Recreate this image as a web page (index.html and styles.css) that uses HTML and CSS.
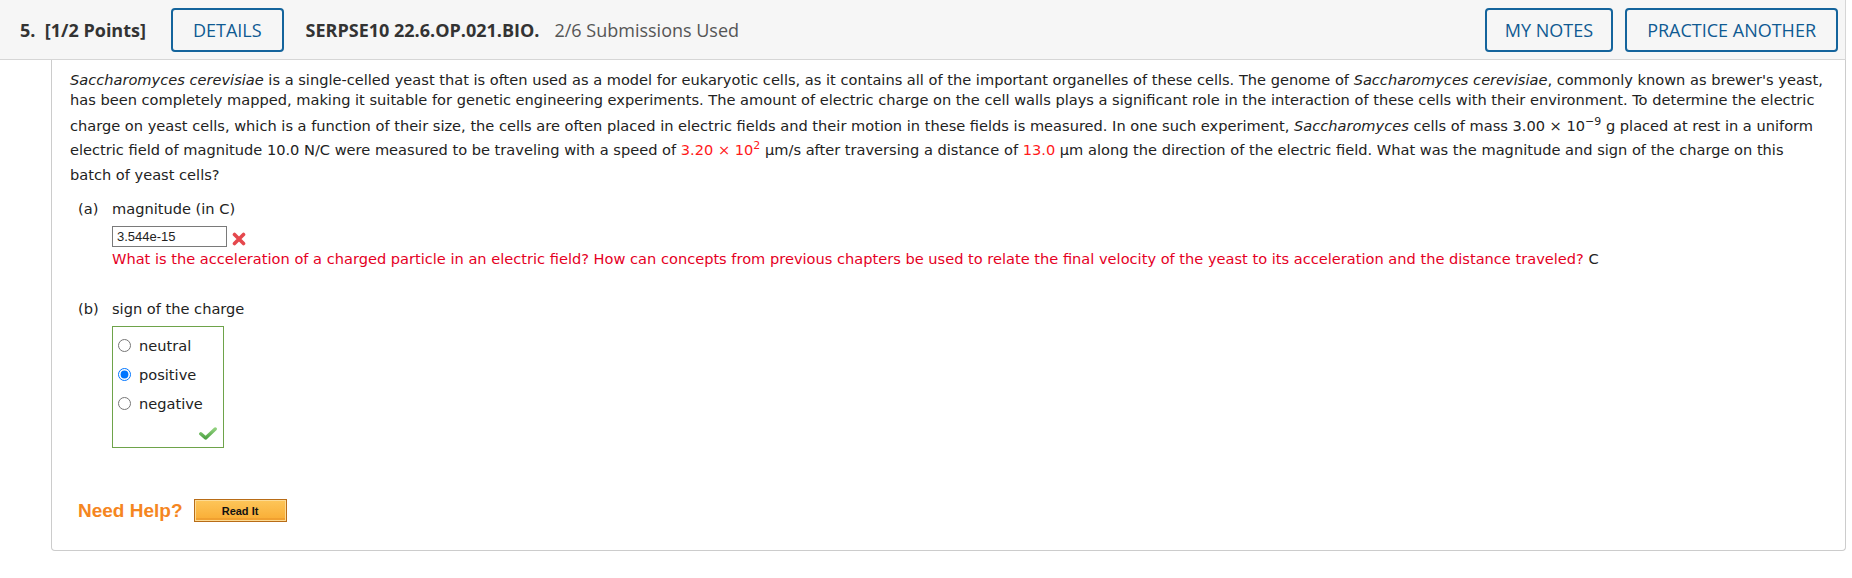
FILE: index.html
```html
<!DOCTYPE html>
<html lang="en">
<head>
<meta charset="utf-8">
<title>Question 5</title>
<link rel="stylesheet" href="styles.css">
</head>
<body>
<div class="question">
  <div class="qhead">
    <span class="qnum">5.&nbsp; [1/2 Points]</span>
    <button class="obtn details">DETAILS</button>
    <span class="qid">SERPSE10 22.6.OP.021.BIO.</span>
    <span class="subs">2/6 Submissions Used</span>
    <div class="head-actions">
      <button class="obtn notes">MY NOTES</button>
      <button class="obtn">PRACTICE ANOTHER</button>
    </div>
  </div>
  <div class="card">
    <p class="stem"><i>Saccharomyces cerevisiae</i> is a single-celled yeast that is often used as a model for eukaryotic cells, as it contains all of the important organelles of these cells. The genome of <i>Saccharomyces cerevisiae</i>, commonly known as brewer's yeast,<br>has been completely mapped, making it suitable for genetic engineering experiments. The amount of electric charge on the cell walls plays a significant role in the interaction of these cells with their environment. To determine the electric<br>charge on yeast cells, which is a function of their size, the cells are often placed in electric fields and their motion in these fields is measured. In one such experiment, <i>Saccharomyces</i> cells of mass <span class="math">3.00 × 10<span class="sup">−9</span></span> g placed at rest in a uniform<br>electric field of magnitude 10.0 N/C were measured to be traveling with a speed of <span class="math math-red red">3.20 × 10<span class="sup">2</span></span> µm/s after traversing a distance of <span class="red">13.0</span> µm along the direction of the electric field. What was the magnitude and sign of the charge on this<br>batch of yeast cells?</p>

    <div class="part part-a">
      <div class="part-label"><span class="letter">(a)</span><span>magnitude (in C)</span></div>
      <div class="part-body">
        <div class="answer-row">
          <input class="answer" type="text" value="3.544e-15">
          <svg class="xmark" width="14" height="14" viewBox="0 0 14 14" aria-hidden="true">
            <path d="M2.5 2.5 L11.5 11.5 M11.5 2.5 L2.5 11.5" stroke="#e5484d" stroke-width="3.6" stroke-linecap="round"/>
          </svg>
        </div>
        <div class="feedback">What is the acceleration of a charged particle in an electric field? How can concepts from previous chapters be used to relate the final velocity of the yeast to its acceleration and the distance traveled? <span class="unit">C</span></div>
      </div>
    </div>

    <div class="part part-b">
      <div class="part-label"><span class="letter">(b)</span><span>sign of the charge</span></div>
      <div class="part-body">
        <div class="radio-box">
          <label class="radio-row"><input type="radio" name="sign"><span>neutral</span></label>
          <label class="radio-row"><input type="radio" name="sign" checked><span>positive</span></label>
          <label class="radio-row"><input type="radio" name="sign"><span>negative</span></label>
          <div class="check-row">
            <svg width="18" height="13" viewBox="0 0 18 13" aria-hidden="true">
              <defs>
                <linearGradient id="chk" x1="0" y1="0" x2="0" y2="1">
                  <stop offset="0" stop-color="#8fd07c"/>
                  <stop offset="1" stop-color="#4fa345"/>
                </linearGradient>
              </defs>
              <path d="M1.8 6.8 L6.6 11 L16.2 2" fill="none" stroke="url(#chk)" stroke-width="3.4" stroke-linecap="round" stroke-linejoin="round"/>
            </svg>
          </div>
        </div>
      </div>
    </div>

    <div class="help">
      <span class="help-text">Need Help?</span>
      <span class="readit">Read It</span>
    </div>
  </div>
</div>
</body>
</html>
```

FILE: styles.css
```css
* { box-sizing: border-box; }

body {
  margin: 0;
  background: #ffffff;
  color: #222222;
  font-family: "DejaVu Sans", Verdana, sans-serif;
}

.question {
  width: 1846px;
}

.qhead {
  display: flex;
  align-items: center;
  height: 60px;
  padding: 0 7px 0 20px;
  background: #f6f6f6;
  border-right: 1px solid #d6d6d6;
  border-bottom: 1px solid #d6d6d6;
  font-family: "Open Sans", sans-serif;
  font-size: 18px;
  color: #333333;
}

.qnum {
  font-weight: 700;
  margin-right: 25px;
}

.obtn {
  height: 44px;
  padding: 0 20px;
  background: transparent;
  border: 2px solid #14649c;
  border-radius: 4px;
  color: #0f5a92;
  font-family: "Open Sans", sans-serif;
  font-size: 18px;
  cursor: pointer;
}

.notes {
  padding: 0 18px;
}

.details {
  margin-right: 22px;
}

.qid {
  font-weight: 700;
  margin-right: 15px;
}

.subs {
  color: #555555;
}

.head-actions {
  margin-left: auto;
  display: flex;
  gap: 12px;
}

.card {
  margin-left: 51px;
  border: 1px solid #cccccc;
  border-top: none;
  border-radius: 0 0 4px 4px;
  padding: 10px 5px 28px 18px;
  font-size: 14.6px;
  line-height: 20px;
}

.stem {
  margin: 0;
  white-space: nowrap;
}

.math {
  display: inline-block;
  padding-top: 6px;
}

.math-red {
  padding-top: 4px;
  padding-bottom: 5px;
}

.sup {
  position: relative;
  top: -6px;
  font-size: 11px;
  line-height: 0;
}

.red { color: #ff1a1a; }

.part {
  display: flex;
  flex-direction: column;
  margin-left: 8px;
}

.part-a { margin-top: 14px; }
.part-b { margin-top: 30px; }

.part-label {
  display: flex;
}

.letter {
  width: 34px;
}

.part-body {
  margin-left: 34px;
}

.part-a .part-body { margin-top: 7px; }
.part-b .part-body { margin-top: 7px; }

.answer-row {
  display: flex;
  align-items: center;
  gap: 5px;
  height: 21px;
  margin-bottom: 2px;
}

.answer {
  width: 115px;
  height: 21px;
  margin: 0;
  padding: 0 4px;
  border: 1px solid #7a7a7a;
  border-radius: 0;
  font-family: "Liberation Sans", Arial, sans-serif;
  font-size: 13px;
  color: #222222;
}

.xmark {
  margin-top: 5px;
}

.feedback {
  color: #e5001f;
}

.unit {
  color: #222222;
}

.radio-box {
  width: 112px;
  border: 1px solid #6ea34a;
  padding: 4px 6px 0 4px;
  display: flex;
  flex-direction: column;
}

.radio-row {
  display: flex;
  align-items: center;
  height: 29px;
  gap: 8px;
}

.radio-row input {
  width: 13px;
  height: 13px;
  margin: 0 0 0 1px;
  accent-color: #0075ff;
}

.check-row {
  display: flex;
  justify-content: flex-end;
  height: 29px;
  padding-top: 9px;
}

.help {
  display: flex;
  align-items: center;
  gap: 11px;
  margin: 51px 0 0 8px;
}

.help-text {
  font-family: "Liberation Sans", Arial, sans-serif;
  font-weight: 700;
  font-size: 19px;
  color: #f5861f;
}

.readit {
  display: flex;
  align-items: center;
  justify-content: center;
  width: 93px;
  height: 23px;
  border: 1px solid #b86c17;
  background: linear-gradient(#fdc65a, #f9ac33);
  box-shadow: inset 0 0 0 1px #fddb94, inset 0 -2px 0 1px #f0a030;
  font-family: "Liberation Sans", Arial, sans-serif;
  font-weight: 700;
  font-size: 11px;
  color: #111111;
}
```
